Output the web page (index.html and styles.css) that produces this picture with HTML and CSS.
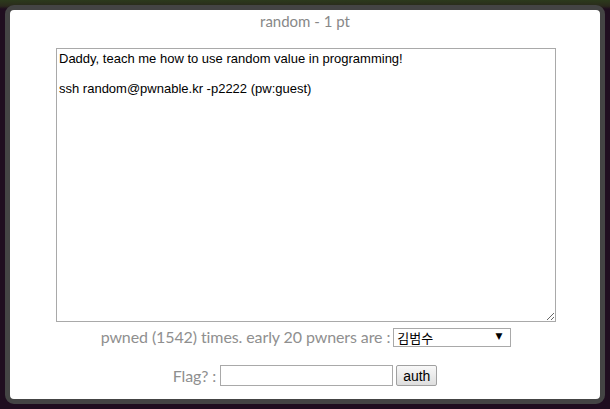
FILE: index.html
```html
<!DOCTYPE html>
<html>
<head>
<meta charset="utf-8">
<link rel="stylesheet" href="styles.css">
</head>
<body>
<div class="scene">
  <div class="modal">
    <div class="title">random - 1 pt</div>
    <textarea class="desc">Daddy, teach me how to use random value in programming!

ssh random@pwnable.kr -p2222 (pw:guest)</textarea>
    <div class="row pwners">
      <span>pwned (1542) times. early 20 pwners are :</span>
      <div class="selwrap">
        <select class="sel"><option>김범수</option></select>
        <span class="arrow">▼</span>
      </div>
    </div>
    <div class="row flag">
      <span>Flag? :</span>
      <input class="flaginput" type="text">
      <button class="auth">auth</button>
    </div>
  </div>
</div>
</body>
</html>
```
FILE: styles.css
```css
html, body {
  margin: 0;
  padding: 0;
}
body {
  width: 610px;
  height: 409px;
  background: #1f0d1f;
  overflow: hidden;
}
.scene {
  padding: 5px;
  background: linear-gradient(to bottom, #2c3a1c 0, #2a2a1c 6px, #1f0d1f 9px);
}
.modal {
  box-sizing: border-box;
  width: 600px;
  height: 399px;
  border: 5px solid #444;
  border-radius: 9px;
  background: #fff;
  display: flex;
  flex-direction: column;
  align-items: center;
  font-family: Lato, "Open Sans", sans-serif;
  color: #8f8f8f;
}
.title {
  font-size: 15px;
  line-height: 20px;
  margin-top: 1px;
  color: #888;
}
.desc {
  box-sizing: border-box;
  width: 500px;
  height: 274px;
  margin-top: 17px;
  margin-left: 2px;
  border: 1px solid #a9a9a9;
  padding: 2px 2px;
  font-family: "Liberation Sans", Arial, sans-serif;
  font-size: 13px;
  line-height: 15px;
  color: #000;
  resize: both;
  outline: none;
}
.row {
  display: flex;
  align-items: center;
  font-size: 16px;
  letter-spacing: -0.1px;
}
.pwners {
  margin-top: 5px;
  margin-left: 2px;
  gap: 3px;
}
.selwrap {
  position: relative;
  width: 118px;
  height: 19px;
}
.sel {
  -webkit-appearance: none;
  appearance: none;
  box-sizing: border-box;
  width: 118px;
  height: 19px;
  border: 1px solid #a9a9a9;
  border-radius: 0;
  background: #fff;
  font-family: "Noto Sans CJK KR", sans-serif;
  font-size: 13px;
  line-height: 17px;
  color: #000;
  padding: 0 3px;
  letter-spacing: 0;
}
.arrow {
  position: absolute;
  right: 9px;
  top: 4px;
  font-size: 9px;
  line-height: 10px;
  color: #000;
  font-family: "DejaVu Sans", sans-serif;
  pointer-events: none;
}
.flag {
  margin-top: 19px;
  margin-left: 0;
  gap: 3px;
}
.flaginput {
  box-sizing: border-box;
  width: 173px;
  height: 21px;
  border: 1px solid #a9a9a9;
  margin-left: 1px;
}
.auth {
  box-sizing: border-box;
  height: 21px;
  width: 41px;
  border: 1px solid #a0a0a0;
  border-radius: 2px;
  background: linear-gradient(#f8f8f8, #dedede);
  font-family: "Liberation Sans", Arial, sans-serif;
  font-size: 14px;
  letter-spacing: 0;
  color: #000;
  padding: 0;
}
```
